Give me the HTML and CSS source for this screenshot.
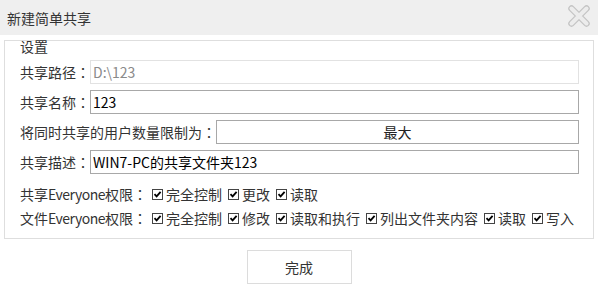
FILE: index.html
```html
<!DOCTYPE html>
<html lang="zh-CN">
<head>
<meta charset="utf-8">
<link rel="stylesheet" href="styles.css">
</head>
<body>
<div class="titlebar">
  <span class="title">新建简单共享</span>
  <svg class="close" width="22" height="22" viewBox="0 0 22 22">
    <path d="M3.5 3.5 L18.5 18.5 M18.5 3.5 L3.5 18.5" stroke="#c4c4c4" stroke-width="6.5" stroke-linecap="round" fill="none"/>
    <path d="M3.5 3.5 L18.5 18.5 M18.5 3.5 L3.5 18.5" stroke="#ececec" stroke-width="4" stroke-linecap="round" fill="none"/>
  </svg>
</div>
<div class="group">
  <div class="legend">设置</div>
  <div class="row">
    <span class="label">共享路径<span class="c" lang="zh-TW">：</span></span>
    <div class="field disabled">D:\123</div>
  </div>
  <div class="row">
    <span class="label">共享名称<span class="c" lang="zh-TW">：</span></span>
    <div class="field">123</div>
  </div>
  <div class="row">
    <span class="label">将同时共享的用户数量限制为<span class="c" lang="zh-TW">：</span></span>
    <div class="field btnfield">最大</div>
  </div>
  <div class="row">
    <span class="label">共享描述<span class="c" lang="zh-TW">：</span></span>
    <div class="field">WIN7-PC的共享文件夹123</div>
  </div>
  <div class="row perm">
    <span class="label plabel">共享<span class="en">Everyone</span>权限<span class="c" lang="zh-TW">：</span></span>
    <span class="item"><span class="cb"></span>完全控制</span>
    <span class="item"><span class="cb"></span>更改</span>
    <span class="item"><span class="cb"></span>读取</span>
  </div>
  <div class="row perm">
    <span class="label plabel">文件<span class="en">Everyone</span>权限<span class="c" lang="zh-TW">：</span></span>
    <span class="item"><span class="cb"></span>完全控制</span>
    <span class="item"><span class="cb"></span>修改</span>
    <span class="item"><span class="cb"></span>读取和执行</span>
    <span class="item"><span class="cb"></span>列出文件夹内容</span>
    <span class="item"><span class="cb"></span>读取</span>
    <span class="item"><span class="cb"></span>写入</span>
  </div>
</div>
<div class="actions">
  <div class="done">完成</div>
</div>
</body>
</html>
```
FILE: styles.css
```css
html, body {
  margin: 0;
  padding: 0;
  background: #ffffff;
}
body {
  font-family: "Noto Sans CJK SC", "Noto Sans", sans-serif;
  font-size: 14px;
  color: #333333;
  width: 598px;
  height: 290px;
  overflow: hidden;
}
.titlebar {
  height: 35px;
  background: #efefef;
  display: flex;
  align-items: center;
  justify-content: space-between;
  padding: 0 8px 0 7px;
}
.title {
  color: #333;
  line-height: 35px;
  padding-top: 1px;
}
.close {
  display: block;
  margin-top: -4px;
}
.group {
  margin: 5px 4px 0 4px;
  border: 1px solid #dedede;
  padding: 0 14px 8px 15px;
  display: flex;
  flex-direction: column;
  gap: 6px;
}
.legend {
  height: 13px;
  line-height: 10px;
  color: #333;
}
.row {
  display: flex;
  align-items: center;
  height: 24px;
}
.label {
  white-space: nowrap;
  line-height: 24px;
}
.c {
  font-family: "Noto Sans CJK TC", "Noto Sans CJK JP", sans-serif;
}
.plabel {
  width: 129px;
  flex: none;
}
.en {
  letter-spacing: -0.5px;
}
.field {
  flex: 1;
  box-sizing: border-box;
  height: 24px;
  border: 1px solid #a8a8a8;
  line-height: 22px;
  padding-left: 2px;
  color: #000;
  white-space: nowrap;
}
.field.disabled {
  border-color: #e2e2e2;
  color: #8a8a8a;
}
.field.btnfield {
  text-align: center;
  padding-left: 0;
  color: #222;
}
.perm {
  margin-top: 2px;
  margin-bottom: -6px;
}
.perm + .perm {
  margin-top: 0;
  margin-bottom: 0;
}
.item {
  display: inline-flex;
  align-items: center;
  margin-left: 3px;
  margin-right: 3px;
  white-space: nowrap;
}
.item:first-of-type {
  margin-left: 2px;
}
.cb {
  display: inline-block;
  width: 11px;
  height: 11px;
  box-sizing: border-box;
  border: 1px solid #444;
  margin-right: 3px;
  background: #fff url("data:image/svg+xml,%3Csvg xmlns='http://www.w3.org/2000/svg' width='9' height='9' viewBox='0 0 9 9'%3E%3Cpath d='M1.5 4.2 L3.6 6.4 L7.6 1.8' stroke='%23000' stroke-width='1.8' fill='none'/%3E%3C/svg%3E") center/9px 9px no-repeat;
}
.actions {
  display: flex;
  justify-content: center;
  margin-top: 11px;
}
.done {
  width: 105px;
  height: 34px;
  box-sizing: border-box;
  border: 1px solid #dcdcdc;
  text-align: center;
  line-height: 32px;
  color: #333;
}
```
